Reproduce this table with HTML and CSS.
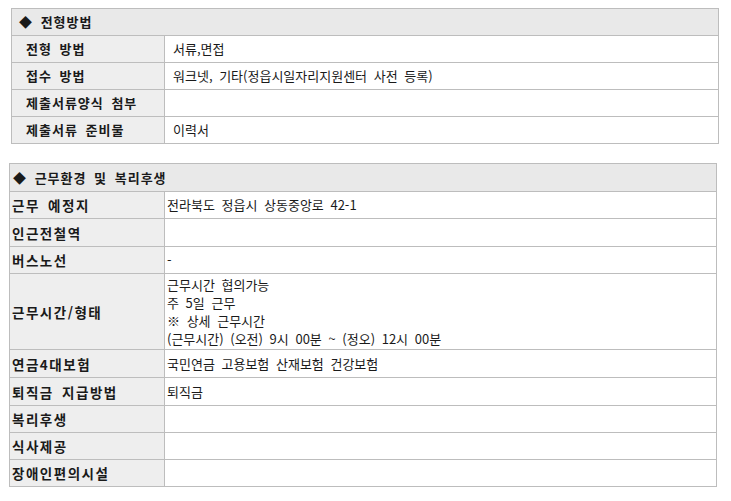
FILE: index.html
```html
<!DOCTYPE html>
<html lang="ko">
<head>
<meta charset="utf-8">
<title>채용정보</title>
<link rel="stylesheet" href="styles.css">
</head>
<body>
<div class="page">
  <table class="info info-a">
    <colgroup><col class="c-lbl"><col class="c-val"></colgroup>
    <tr class="head"><th colspan="2">◆ 전형방법</th></tr>
    <tr><th class="lbl">전형 방법</th><td class="val">서류,면접</td></tr>
    <tr><th class="lbl">접수 방법</th><td class="val">워크넷, 기타(정읍시일자리지원센터 사전 등록)</td></tr>
    <tr><th class="lbl">제출서류양식 첨부</th><td class="val"></td></tr>
    <tr><th class="lbl">제출서류 준비물</th><td class="val">이력서</td></tr>
  </table>

  <table class="info info-b">
    <colgroup><col class="c-lbl"><col class="c-val"></colgroup>
    <tr class="head"><th colspan="2">◆ 근무환경 및 복리후생</th></tr>
    <tr><th class="lbl">근무 예정지</th><td class="val">전라북도 정읍시 상동중앙로 42-1</td></tr>
    <tr class="tall"><th class="lbl">인근전철역</th><td class="val"></td></tr>
    <tr><th class="lbl">버스노선</th><td class="val">-</td></tr>
    <tr class="multi"><th class="lbl">근무시간/형태</th><td class="val">근무시간 협의가능<br>주 5일 근무<br>※ 상세 근무시간<br>(근무시간) (오전) 9시 00분 ~ (정오) 12시 00분</td></tr>
    <tr class="tall"><th class="lbl">연금4대보험</th><td class="val">국민연금 고용보험 산재보험 건강보험</td></tr>
    <tr class="tall"><th class="lbl">퇴직금 지급방법</th><td class="val">퇴직금</td></tr>
    <tr><th class="lbl">복리후생</th><td class="val"></td></tr>
    <tr><th class="lbl">식사제공</th><td class="val"></td></tr>
    <tr><th class="lbl">장애인편의시설</th><td class="val"></td></tr>
  </table>
</div>
</body>
</html>
```
FILE: styles.css
```css
html, body {
  margin: 0;
  padding: 0;
  background: #ffffff;
}

body {
  font-family: "Noto Sans CJK KR", "Noto Sans", sans-serif;
  font-size: 13px;
  color: #1a1a1a;
}

.page {
  display: flex;
  flex-direction: column;
  padding-top: 8px;
}

.info {
  border-collapse: collapse;
  width: 708px;
  table-layout: fixed;
}

.info th,
.info td {
  border: 1px solid #bdbdbd;
  line-height: 18px;
  height: 18px;
  padding: 4px 2px 4px 2px;
  text-align: left;
  vertical-align: middle;
  word-spacing: 3px;
  white-space: nowrap;
}

.info .head th {
  background: #e9e9e9;
  font-weight: bold;
  letter-spacing: 1px;
}

.info .lbl {
  background: #eeeeee;
  font-weight: bold;
  letter-spacing: 1px;
}

.info .val {
  background: #ffffff;
  font-weight: normal;
}

.info-a {
  margin-left: 11px;
}

.info-a .c-lbl {
  width: 153px;
}

.info-a .head th {
  padding-left: 7px;
}

.info-a .lbl {
  padding-left: 14px;
}

.info-a .val {
  padding-left: 8px;
}

.info-b {
  margin-left: 9px;
  margin-top: 19px;
}

.info-b .c-lbl {
  width: 155px;
}

.info-b .lbl {
  font-size: 13.5px;
  letter-spacing: 1.5px;
}

.info-b .head th {
  padding-left: 3px;
  padding-top: 5px;
}

.info-b .tall th,
.info-b .tall td {
  padding-top: 5px;
}

.info-b .multi th,
.info-b .multi td {
  padding-top: 2px;
  padding-bottom: 1px;
}
```
